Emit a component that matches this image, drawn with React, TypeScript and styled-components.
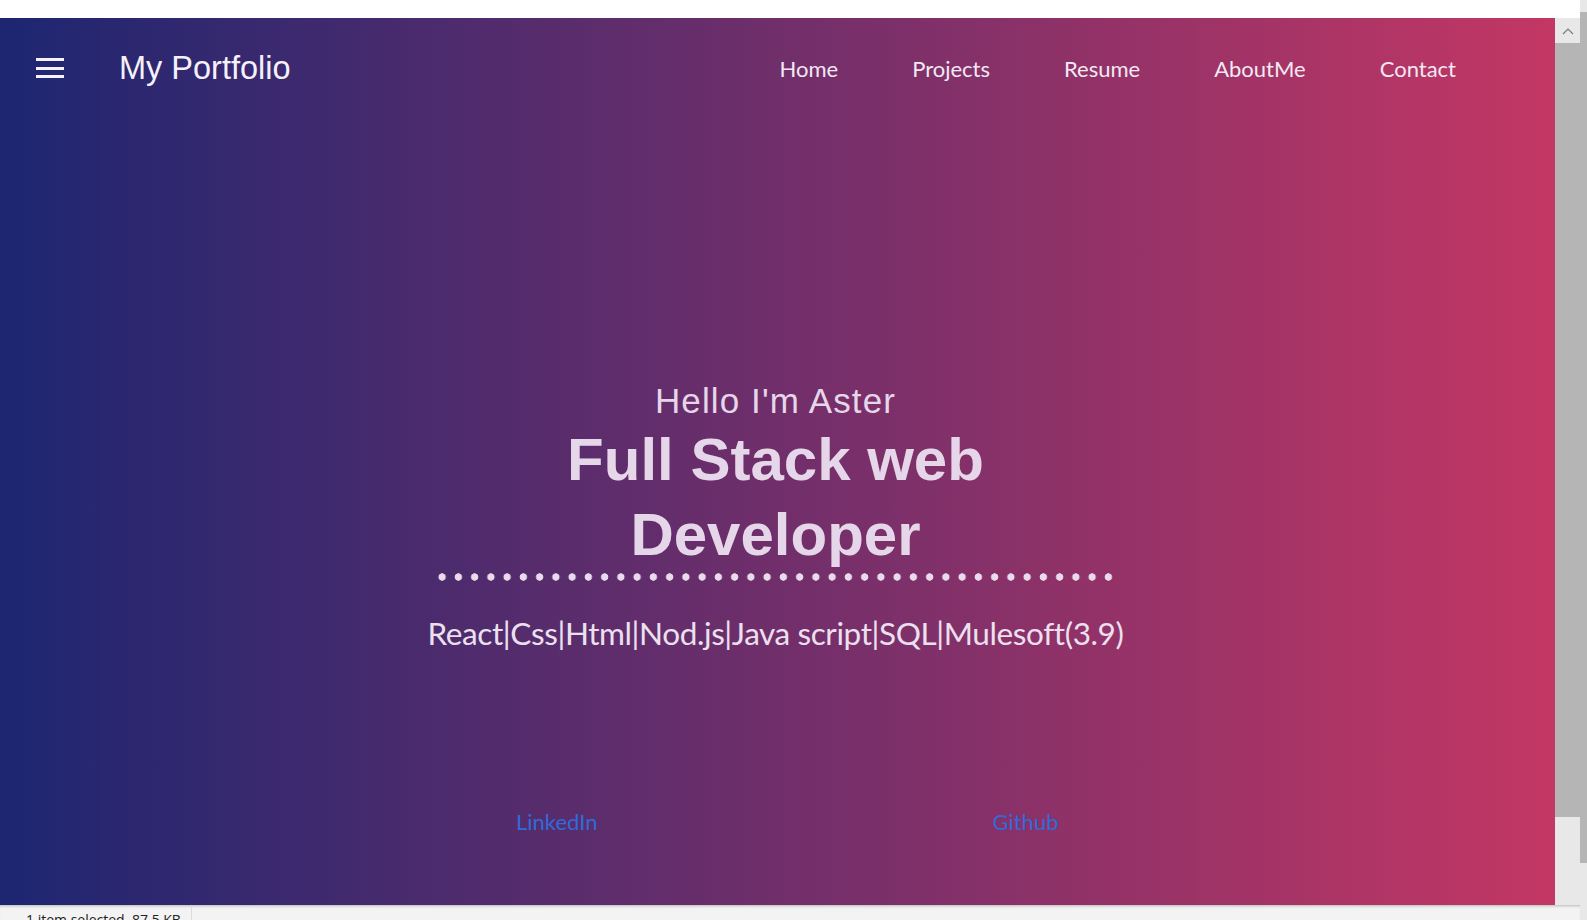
import React from "react";
import styled, { createGlobalStyle } from "styled-components";

const GlobalStyle = createGlobalStyle`
  html, body {
    margin: 0;
    padding: 0;
    width: 1587px;
    height: 920px;
    overflow: hidden;
    background: #ffffff;
  }
  * { box-sizing: border-box; }
`;

const Frame = styled.div`
  display: flex;
  width: 1587px;
  height: 920px;
`;

const Window = styled.div`
  flex: 1;
  display: flex;
  flex-direction: column;
  min-width: 0;
`;

const TopStrip = styled.div`
  height: 18px;
  background: #ffffff;
`;

const Viewport = styled.div`
  display: flex;
  height: 887px;
`;

const Page = styled.main`
  flex: 1;
  display: flex;
  flex-direction: column;
  background: linear-gradient(to right, #1d2671, #c33764);
  color: #f3ecf6;
`;

const Header = styled.header`
  height: 100px;
  display: flex;
  align-items: center;
  padding: 0 99px 0 36px;
`;

const Burger = styled.button`
  width: 28px;
  height: 20px;
  padding: 0;
  border: none;
  background: none;
  display: flex;
  flex-direction: column;
  justify-content: space-between;
  margin-right: 55px;
  cursor: pointer;
`;

const BurgerBar = styled.span`
  display: block;
  height: 3px;
  width: 100%;
  background: #f6f1fa;
`;

const Brand = styled.div`
  font-family: "Liberation Sans", Arial, sans-serif;
  font-size: 32.5px;
  color: #f6f0f9;
`;

const Nav = styled.nav`
  margin-left: auto;
  display: flex;
  gap: 74px;
`;

const NavLink = styled.a`
  font-family: Lato, "Open Sans", sans-serif;
  font-size: 22px;
  color: #f3e8f3;
  text-decoration: none;
`;

const Hero = styled.section`
  margin: 263px 0 0 434px;
  width: 683px;
  display: flex;
  flex-direction: column;
  align-items: center;
  color: #e6d6e9;
  text-align: center;
`;

const Greeting = styled.p`
  margin: 0;
  font-family: "Liberation Sans", Arial, sans-serif;
  font-size: 35px;
  line-height: 40px;
  letter-spacing: 1.1px;
`;

const Title = styled.h1`
  margin: 1px 0 0;
  font-family: "Liberation Sans", Arial, sans-serif;
  font-size: 60px;
  line-height: 75px;
  font-weight: 700;
`;

const Dots = styled.div`
  margin-top: 1px;
  width: 683px;
  height: 8px;
  background-image: radial-gradient(circle, #e9dbec 3.4px, transparent 4px);
  background-size: 16.25px 8px;
  background-repeat: repeat-x;
`;

const Skills = styled.p`
  margin: 32px 0 0;
  font-family: Lato, "Open Sans", sans-serif;
  font-size: 31.5px;
  line-height: 40px;
  letter-spacing: -0.4px;
  white-space: nowrap;
  color: #ece0ef;
`;

const LinksRow = styled.div`
  display: flex;
  gap: 395px;
  padding-left: 516px;
  margin-top: 155px;
`;

const SocialLink = styled.a`
  font-family: Lato, "Open Sans", sans-serif;
  font-size: 22px;
  line-height: 28px;
  color: #2f6bd8;
  text-decoration: none;
`;

const InnerScroll = styled.div`
  width: 25px;
  display: flex;
  flex-direction: column;
  background: #b5b5b5;
`;

const ArrowBox = styled.div<{ $h: number }>`
  height: ${(p) => p.$h}px;
  background: #e8e8e8;
  display: flex;
  align-items: center;
  justify-content: center;
`;

const Thumb = styled.div`
  flex: 1;
  background: #b5b5b5;
`;

const Track = styled.div<{ $h: number }>`
  height: ${(p) => p.$h}px;
  background: #e8e8e8;
`;

const OuterScroll = styled.div`
  width: 7px;
  display: flex;
  flex-direction: column;
  background: #b5b5b5;
  overflow: hidden;
`;

const OuterTop = styled.div`
  height: 12px;
  background: #e8e8e8;
`;

const OuterBottom = styled.div`
  margin-top: auto;
  height: 57px;
  background: #e8e8e8;
`;

const StatusBar = styled.div`
  height: 15px;
  background: #f3f3f3;
  box-shadow: inset 0 3px 3px -2px rgba(0, 0, 0, 0.25);
  display: flex;
  overflow: hidden;
`;

const StatusCell = styled.div`
  width: 192px;
  border-right: 1px solid #dcdcdc;
  padding: 6px 0 0 26px;
  font-family: "Open Sans", Lato, sans-serif;
  font-size: 14px;
  line-height: 18px;
  color: #222;
  white-space: nowrap;
`;

const Chevron = ({ up }: { up: boolean }) => (
  <svg width="12" height="8" viewBox="0 0 12 8">
    <path
      d={up ? "M1 7 L6 2 L11 7" : "M1 1 L6 6 L11 1"}
      fill="none"
      stroke="#7a7a7a"
      strokeWidth="1.2"
    />
  </svg>
);

export default function App() {
  return (
    <>
      <GlobalStyle />
      <Frame>
        <Window>
          <TopStrip />
          <Viewport>
            <Page>
              <Header>
                <Burger aria-label="menu">
                  <BurgerBar />
                  <BurgerBar />
                  <BurgerBar />
                </Burger>
                <Brand>My Portfolio</Brand>
                <Nav>
                  <NavLink href="#">Home</NavLink>
                  <NavLink href="#">Projects</NavLink>
                  <NavLink href="#">Resume</NavLink>
                  <NavLink href="#">AboutMe</NavLink>
                  <NavLink href="#">Contact</NavLink>
                </Nav>
              </Header>
              <Hero>
                <Greeting>Hello I'm Aster</Greeting>
                <Title>Full Stack web Developer</Title>
                <Dots />
                <Skills>React|Css|Html|Nod.js|Java script|SQL|Mulesoft(3.9)</Skills>
              </Hero>
              <LinksRow>
                <SocialLink href="#">LinkedIn</SocialLink>
                <SocialLink href="#">Github</SocialLink>
              </LinksRow>
            </Page>
            <InnerScroll>
              <ArrowBox $h={25}>
                <Chevron up />
              </ArrowBox>
              <Thumb />
              <Track $h={88} />
            </InnerScroll>
          </Viewport>
          <StatusBar>
            <StatusCell>1 item selected&nbsp;&nbsp;87.5 KB</StatusCell>
          </StatusBar>
        </Window>
        <OuterScroll>
          <OuterTop />
          <OuterBottom />
        </OuterScroll>
      </Frame>
    </>
  );
}
